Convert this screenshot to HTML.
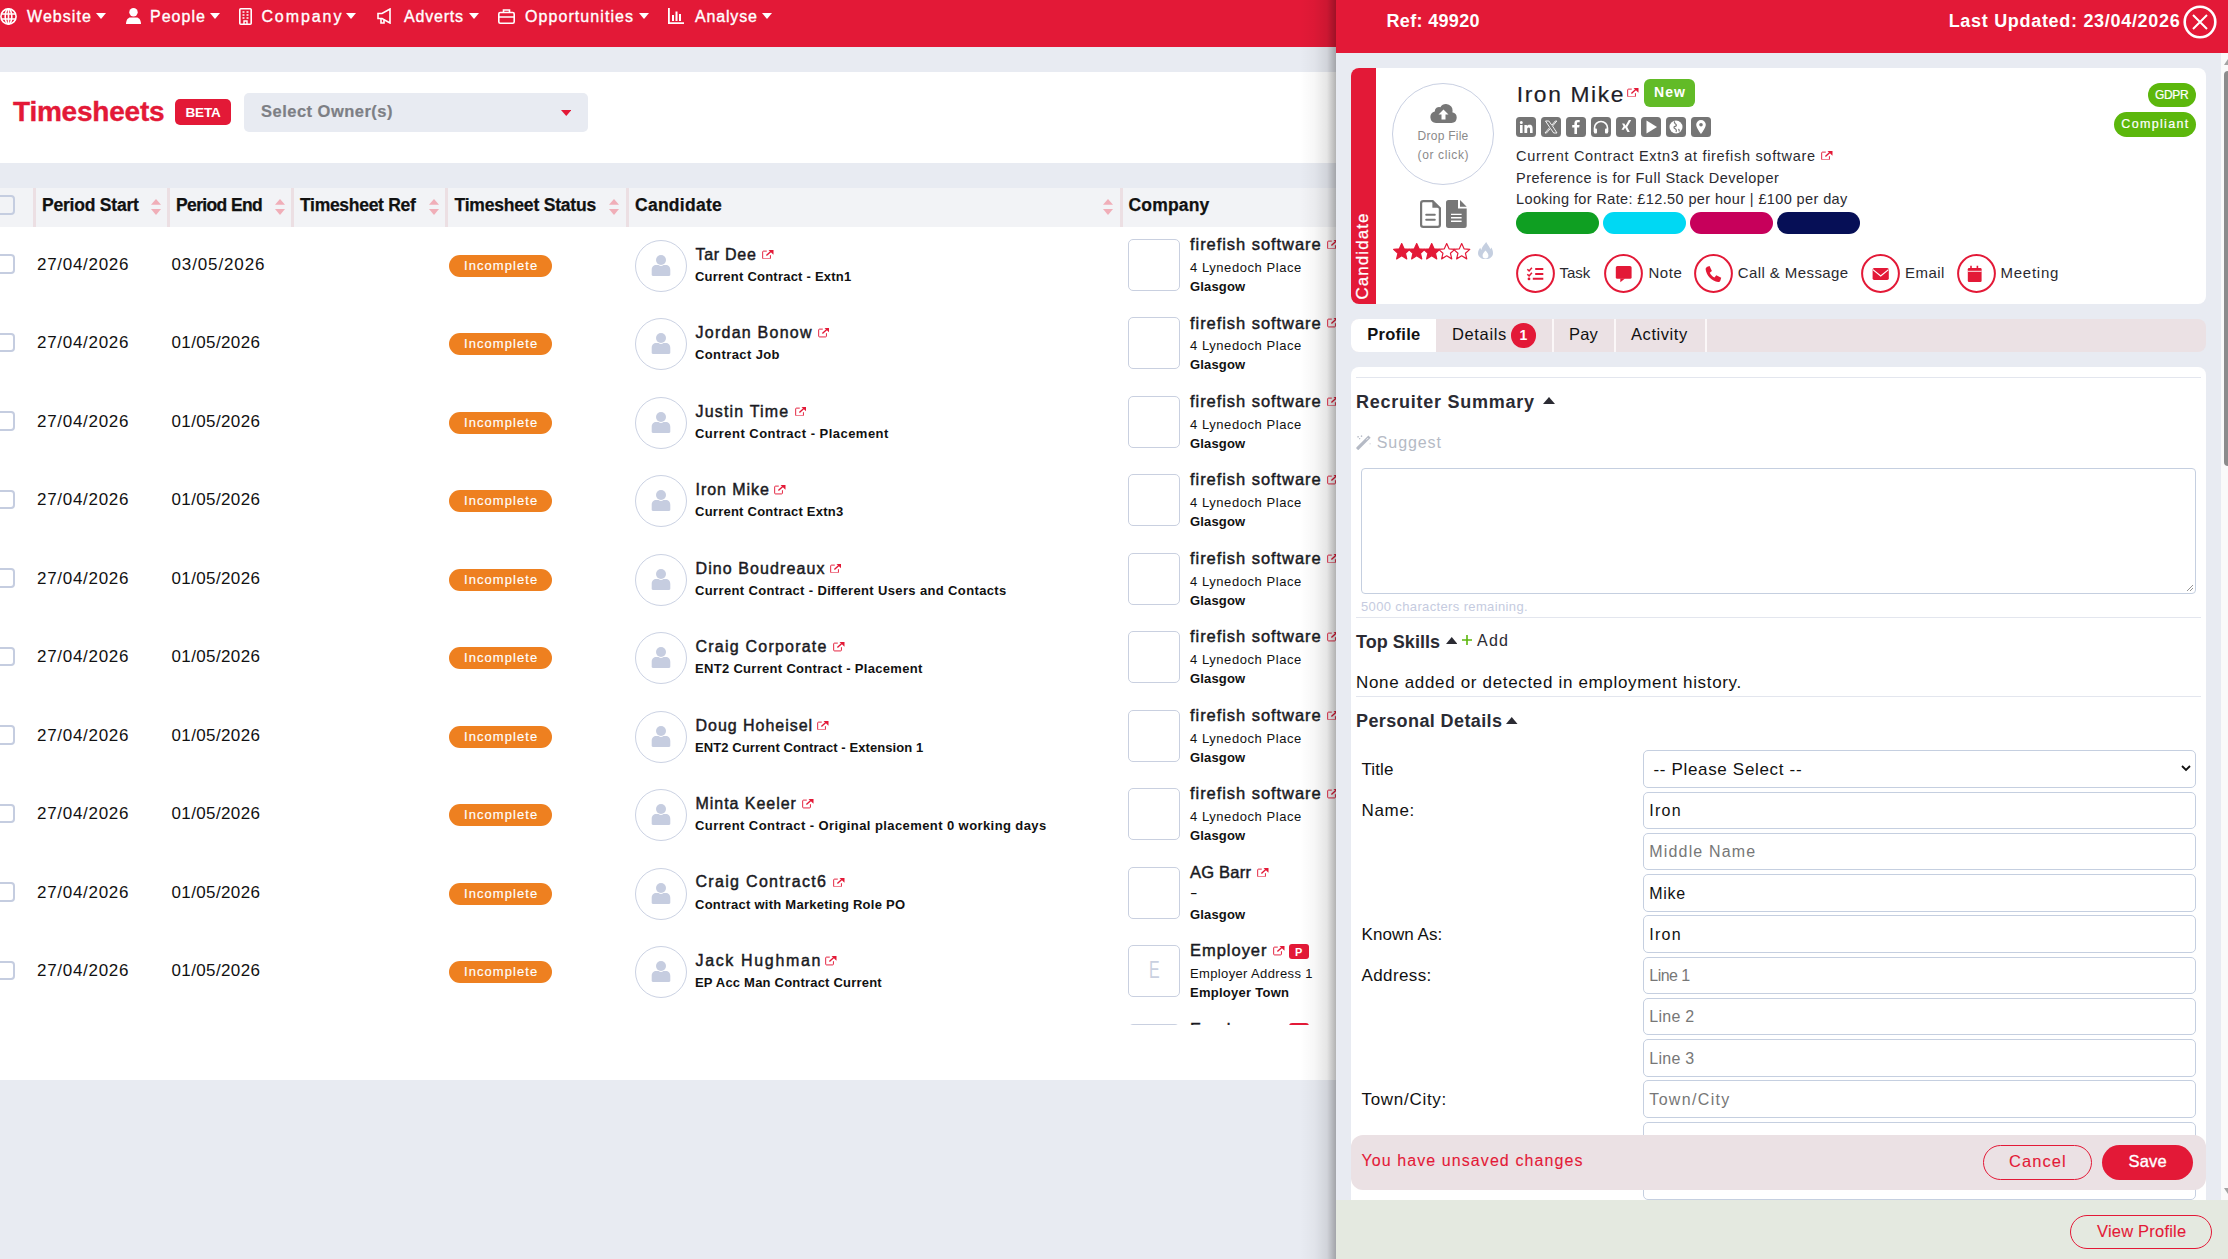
<!DOCTYPE html>
<html><head><meta charset="utf-8"><title>Timesheets</title>
<style>
html,body{margin:0;padding:0;width:2228px;height:1259px;overflow:hidden;background:#e8ebf2;font-family:"Liberation Sans",sans-serif;}
.t{position:absolute;white-space:nowrap;}
div,svg{box-sizing:border-box;}
</style></head><body>
<div style="position:absolute;left:0px;top:0px;width:1336px;height:47px;background:#e31937"></div><svg style="position:absolute;left:0;top:8px" width="17" height="17" viewBox="0 0 17 17" fill="none" stroke="#fff" stroke-width="1.6"><circle cx="8.5" cy="8.5" r="7.6"/><ellipse cx="8.5" cy="8.5" rx="3.3" ry="7.6"/><path d="M1 6h15M1 11h15M8.5 1v15"/></svg><div class="t" style="left:27.00px;top:8.65px;font-size:16px;line-height:16px;color:#fff;letter-spacing:1.065px;-webkit-text-stroke:0.35px currentColor;">Website</div><svg style="position:absolute;left:96px;top:12.5px" width="10" height="6" viewBox="0 0 10 6"><path d="M0 0H10L5.0 6Z" fill="#fff"/></svg><svg style="position:absolute;left:126px;top:8px" width="15" height="16" viewBox="0 0 15 16" fill="#fff"><circle cx="7.5" cy="4.2" r="4.2"/><path d="M0 16c0-4.5 2.5-6.6 4.2-6.6h6.6c1.7 0 4.2 2.1 4.2 6.6z"/></svg><div class="t" style="left:150.00px;top:8.65px;font-size:16px;line-height:16px;color:#fff;letter-spacing:1.016px;-webkit-text-stroke:0.35px currentColor;">People</div><svg style="position:absolute;left:210px;top:12.5px" width="10" height="6" viewBox="0 0 10 6"><path d="M0 0H10L5.0 6Z" fill="#fff"/></svg><svg style="position:absolute;left:239px;top:8px" width="13" height="17" viewBox="0 0 13 17" fill="none" stroke="#fff" stroke-width="1.6"><rect x="0.8" y="0.8" width="11.4" height="15.4" rx="1"/><path d="M3.5 4h2M7.5 4h2M3.5 7h2M7.5 7h2M3.5 10h2M7.5 10h2M5 16v-3h3v3" stroke-width="1.4"/></svg><div class="t" style="left:261.40px;top:8.65px;font-size:16px;line-height:16px;color:#fff;letter-spacing:1.921px;-webkit-text-stroke:0.35px currentColor;">Company</div><svg style="position:absolute;left:346px;top:12.5px" width="10" height="6" viewBox="0 0 10 6"><path d="M0 0H10L5.0 6Z" fill="#fff"/></svg><svg style="position:absolute;left:377px;top:8px" width="16" height="16" viewBox="0 0 16 16" fill="none" stroke="#fff" stroke-width="1.6"><path d="M1 5.5h4l8-4.5v14l-8-4.5H1z"/><path d="M4 10.5v4.5h3v-4"/></svg><div class="t" style="left:404.00px;top:8.65px;font-size:16px;line-height:16px;color:#fff;letter-spacing:0.793px;-webkit-text-stroke:0.35px currentColor;">Adverts</div><svg style="position:absolute;left:469px;top:12.5px" width="10" height="6" viewBox="0 0 10 6"><path d="M0 0H10L5.0 6Z" fill="#fff"/></svg><svg style="position:absolute;left:498px;top:9px" width="17" height="15" viewBox="0 0 17 15" fill="none" stroke="#fff" stroke-width="1.6"><rect x="0.8" y="3.5" width="15.4" height="10.7" rx="1.5"/><path d="M5.5 3.5V1h6v2.5M1 8h15"/></svg><div class="t" style="left:525.00px;top:8.65px;font-size:16px;line-height:16px;color:#fff;letter-spacing:1.070px;-webkit-text-stroke:0.35px currentColor;">Opportunities</div><svg style="position:absolute;left:639px;top:12.5px" width="10" height="6" viewBox="0 0 10 6"><path d="M0 0H10L5.0 6Z" fill="#fff"/></svg><svg style="position:absolute;left:668px;top:8px" width="16" height="16" viewBox="0 0 16 16" fill="#fff"><path d="M0 0h1.8v14.2H16V16H0z"/><rect x="4" y="7" width="2" height="6"/><rect x="7.5" y="3.5" width="2" height="9.5"/><rect x="11" y="6" width="2" height="7"/></svg><div class="t" style="left:695.00px;top:8.65px;font-size:16px;line-height:16px;color:#fff;letter-spacing:0.829px;-webkit-text-stroke:0.35px currentColor;">Analyse</div><svg style="position:absolute;left:762px;top:12.5px" width="10" height="6" viewBox="0 0 10 6"><path d="M0 0H10L5.0 6Z" fill="#fff"/></svg><div style="position:absolute;left:0px;top:72px;width:1336px;height:91px;background:#fff"></div><div class="t" style="left:13.00px;top:97.69px;font-size:28px;line-height:28px;font-weight:700;color:#e31937;letter-spacing:-0.221px;-webkit-text-stroke:0.4px currentColor;">Timesheets</div><div style="position:absolute;left:175px;top:99px;width:56px;height:26px;background:#e31937;border-radius:5px"></div><div class="t" style="left:185.50px;top:105.97px;font-size:13.5px;line-height:13.5px;font-weight:700;color:#fff;letter-spacing:-0.166px;">BETA</div><div style="position:absolute;left:244px;top:93px;width:344px;height:39px;background:#e8ebf2;border-radius:5px"></div><div class="t" style="left:261.00px;top:102.83px;font-size:16.5px;line-height:16.5px;font-weight:700;color:#7d7f85;letter-spacing:0.485px;-webkit-text-stroke:0.2px currentColor;">Select Owner(s)</div><svg style="position:absolute;left:560.5px;top:110px" width="10.5" height="6" viewBox="0 0 10.5 6"><path d="M0 0H10.5L5.25 6Z" fill="#e31937"/></svg><div style="position:absolute;left:0px;top:188px;width:1336px;height:892px;background:#fff"></div><div style="position:absolute;left:0px;top:188px;width:1336px;height:39px;background:#f2f3f6"></div><div style="position:absolute;left:-4px;top:195px;width:19px;height:19.5px;border:2px solid #c5cde0;border-radius:4px"></div><div style="position:absolute;left:33px;top:188px;width:3px;height:39px;background:#ecdfe3"></div><div style="position:absolute;left:167px;top:188px;width:3px;height:39px;background:#ecdfe3"></div><div style="position:absolute;left:291px;top:188px;width:3px;height:39px;background:#ecdfe3"></div><div style="position:absolute;left:445px;top:188px;width:3px;height:39px;background:#ecdfe3"></div><div style="position:absolute;left:626px;top:188px;width:3px;height:39px;background:#ecdfe3"></div><div style="position:absolute;left:1120px;top:188px;width:3px;height:39px;background:#ecdfe3"></div><div class="t" style="left:42.00px;top:196.78px;font-size:17.5px;line-height:17.5px;font-weight:700;color:#111;letter-spacing:-0.215px;-webkit-text-stroke:0.25px currentColor;">Period Start</div><svg style="position:absolute;left:151px;top:199px" width="10" height="16" viewBox="0 0 10 16" fill="#f0aeb8"><path d="M0 5.8L5 0L10 5.8z"/><path d="M0 10L5 16L10 10z"/></svg><div class="t" style="left:176.00px;top:196.78px;font-size:17.5px;line-height:17.5px;font-weight:700;color:#111;letter-spacing:-0.631px;-webkit-text-stroke:0.25px currentColor;">Period End</div><svg style="position:absolute;left:275px;top:199px" width="10" height="16" viewBox="0 0 10 16" fill="#f0aeb8"><path d="M0 5.8L5 0L10 5.8z"/><path d="M0 10L5 16L10 10z"/></svg><div class="t" style="left:300.00px;top:196.78px;font-size:17.5px;line-height:17.5px;font-weight:700;color:#111;letter-spacing:-0.290px;-webkit-text-stroke:0.25px currentColor;">Timesheet Ref</div><svg style="position:absolute;left:428.5px;top:199px" width="10" height="16" viewBox="0 0 10 16" fill="#f0aeb8"><path d="M0 5.8L5 0L10 5.8z"/><path d="M0 10L5 16L10 10z"/></svg><div class="t" style="left:454.50px;top:196.78px;font-size:17.5px;line-height:17.5px;font-weight:700;color:#111;letter-spacing:-0.190px;-webkit-text-stroke:0.25px currentColor;">Timesheet Status</div><svg style="position:absolute;left:609px;top:199px" width="10" height="16" viewBox="0 0 10 16" fill="#f0aeb8"><path d="M0 5.8L5 0L10 5.8z"/><path d="M0 10L5 16L10 10z"/></svg><div class="t" style="left:635.00px;top:196.78px;font-size:17.5px;line-height:17.5px;font-weight:700;color:#111;letter-spacing:0.267px;-webkit-text-stroke:0.25px currentColor;">Candidate</div><svg style="position:absolute;left:1103px;top:199px" width="10" height="16" viewBox="0 0 10 16" fill="#f0aeb8"><path d="M0 5.8L5 0L10 5.8z"/><path d="M0 10L5 16L10 10z"/></svg><div class="t" style="left:1128.50px;top:196.78px;font-size:17.5px;line-height:17.5px;font-weight:700;color:#111;letter-spacing:0.167px;-webkit-text-stroke:0.25px currentColor;">Company</div><div style="position:absolute;left:0;top:0;width:2228px;height:1259px;clip-path:inset(227px 0 234px 0)"><div style="position:absolute;left:-4px;top:254.2px;width:19px;height:19.5px;border:2px solid #c5cde0;border-radius:4px;background:#fff"></div><div class="t" style="left:37.00px;top:256.01px;font-size:17px;line-height:17px;color:#111;letter-spacing:0.708px;">27/04/2026</div><div class="t" style="left:171.50px;top:256.01px;font-size:17px;line-height:17px;color:#111;letter-spacing:0.875px;">03/05/2026</div><div style="position:absolute;left:449px;top:255.0px;width:103px;height:22px;background:#ee8020;border-radius:11px"></div><div class="t" style="left:464.00px;top:258.99px;font-size:13px;line-height:13px;color:#fff;letter-spacing:1.071px;-webkit-text-stroke:0.15px #fff;">Incomplete</div><div style="position:absolute;left:635px;top:240.0px;width:52px;height:52px;border:1px solid #cbd2e3;border-radius:50%;background:#fff"></div><svg style="position:absolute;left:651px;top:255.0px" width="20" height="21" viewBox="0 0 20 21" fill="#c6cde0"><circle cx="10" cy="5" r="5"/><path d="M0.7 15c0-3.5 2-5 4.5-5h2.3c.8.6 1.6.9 2.5.9s1.7-.3 2.5-.9h2.3c2.5 0 4.5 1.5 4.5 5v4.8c0 .7-.5 1.2-1.2 1.2H1.9c-.7 0-1.2-.5-1.2-1.2z"/></svg><div class="t" style="left:695.50px;top:246.65px;font-size:16px;line-height:16px;color:#1a1a22;letter-spacing:0.729px;-webkit-text-stroke:0.45px currentColor;">Tar Dee</div><svg style="position:absolute;left:762px;top:250.0px" width="11.5" height="9.3" viewBox="0 0 12 10" preserveAspectRatio="none" fill="none" stroke="#e31937"><path d="M5 1.2H1.6a.9.9 0 0 0-.9.9v6.6a.9.9 0 0 0 .9.9h6.3a.9.9 0 0 0 .9-.9V5.6" stroke-width="1"/><path d="M4.6 6L10 .8" stroke-width="1.4"/><path d="M6.8 0H12V5.2z" fill="#e31937" stroke="none"/></svg><div class="t" style="left:695.00px;top:269.99px;font-size:13px;line-height:13px;font-weight:700;color:#111;letter-spacing:0.229px;">Current Contract - Extn1</div><div style="position:absolute;left:1128px;top:239.0px;width:52px;height:52px;border:1px solid #c9d0e0;border-radius:5px;background:#fff"></div><div class="t" style="left:1190.00px;top:236.03px;font-size:16.5px;line-height:16.5px;color:#1a1a22;letter-spacing:0.946px;-webkit-text-stroke:0.45px currentColor;">firefish software</div><svg style="position:absolute;left:1327px;top:240.0px" width="11.5" height="9.3" viewBox="0 0 12 10" preserveAspectRatio="none" fill="none" stroke="#e31937"><path d="M5 1.2H1.6a.9.9 0 0 0-.9.9v6.6a.9.9 0 0 0 .9.9h6.3a.9.9 0 0 0 .9-.9V5.6" stroke-width="1"/><path d="M4.6 6L10 .8" stroke-width="1.4"/><path d="M6.8 0H12V5.2z" fill="#e31937" stroke="none"/></svg><div class="t" style="left:1190.00px;top:260.99px;font-size:13px;line-height:13px;color:#111;letter-spacing:0.557px;">4 Lynedoch Place</div><div class="t" style="left:1190.00px;top:279.99px;font-size:13px;line-height:13px;font-weight:700;color:#111;letter-spacing:0.156px;">Glasgow</div><div style="position:absolute;left:-4px;top:332.68px;width:19px;height:19.5px;border:2px solid #c5cde0;border-radius:4px;background:#fff"></div><div class="t" style="left:37.00px;top:334.49px;font-size:17px;line-height:17px;color:#111;letter-spacing:0.708px;">27/04/2026</div><div class="t" style="left:171.50px;top:334.49px;font-size:17px;line-height:17px;color:#111;letter-spacing:0.375px;">01/05/2026</div><div style="position:absolute;left:449px;top:333.48px;width:103px;height:22px;background:#ee8020;border-radius:11px"></div><div class="t" style="left:464.00px;top:337.47px;font-size:13px;line-height:13px;color:#fff;letter-spacing:1.071px;-webkit-text-stroke:0.15px #fff;">Incomplete</div><div style="position:absolute;left:635px;top:318.48px;width:52px;height:52px;border:1px solid #cbd2e3;border-radius:50%;background:#fff"></div><svg style="position:absolute;left:651px;top:333.48px" width="20" height="21" viewBox="0 0 20 21" fill="#c6cde0"><circle cx="10" cy="5" r="5"/><path d="M0.7 15c0-3.5 2-5 4.5-5h2.3c.8.6 1.6.9 2.5.9s1.7-.3 2.5-.9h2.3c2.5 0 4.5 1.5 4.5 5v4.8c0 .7-.5 1.2-1.2 1.2H1.9c-.7 0-1.2-.5-1.2-1.2z"/></svg><div class="t" style="left:695.50px;top:325.13px;font-size:16px;line-height:16px;color:#1a1a22;letter-spacing:1.251px;-webkit-text-stroke:0.45px currentColor;">Jordan Bonow</div><svg style="position:absolute;left:817.6px;top:328.48px" width="11.5" height="9.3" viewBox="0 0 12 10" preserveAspectRatio="none" fill="none" stroke="#e31937"><path d="M5 1.2H1.6a.9.9 0 0 0-.9.9v6.6a.9.9 0 0 0 .9.9h6.3a.9.9 0 0 0 .9-.9V5.6" stroke-width="1"/><path d="M4.6 6L10 .8" stroke-width="1.4"/><path d="M6.8 0H12V5.2z" fill="#e31937" stroke="none"/></svg><div class="t" style="left:695.00px;top:348.47px;font-size:13px;line-height:13px;font-weight:700;color:#111;letter-spacing:0.397px;">Contract Job</div><div style="position:absolute;left:1128px;top:317.48px;width:52px;height:52px;border:1px solid #c9d0e0;border-radius:5px;background:#fff"></div><div class="t" style="left:1190.00px;top:314.51px;font-size:16.5px;line-height:16.5px;color:#1a1a22;letter-spacing:0.946px;-webkit-text-stroke:0.45px currentColor;">firefish software</div><svg style="position:absolute;left:1327px;top:318.48px" width="11.5" height="9.3" viewBox="0 0 12 10" preserveAspectRatio="none" fill="none" stroke="#e31937"><path d="M5 1.2H1.6a.9.9 0 0 0-.9.9v6.6a.9.9 0 0 0 .9.9h6.3a.9.9 0 0 0 .9-.9V5.6" stroke-width="1"/><path d="M4.6 6L10 .8" stroke-width="1.4"/><path d="M6.8 0H12V5.2z" fill="#e31937" stroke="none"/></svg><div class="t" style="left:1190.00px;top:339.47px;font-size:13px;line-height:13px;color:#111;letter-spacing:0.557px;">4 Lynedoch Place</div><div class="t" style="left:1190.00px;top:358.47px;font-size:13px;line-height:13px;font-weight:700;color:#111;letter-spacing:0.156px;">Glasgow</div><div style="position:absolute;left:-4px;top:411.15999999999997px;width:19px;height:19.5px;border:2px solid #c5cde0;border-radius:4px;background:#fff"></div><div class="t" style="left:37.00px;top:412.97px;font-size:17px;line-height:17px;color:#111;letter-spacing:0.708px;">27/04/2026</div><div class="t" style="left:171.50px;top:412.97px;font-size:17px;line-height:17px;color:#111;letter-spacing:0.375px;">01/05/2026</div><div style="position:absolute;left:449px;top:411.96000000000004px;width:103px;height:22px;background:#ee8020;border-radius:11px"></div><div class="t" style="left:464.00px;top:415.95px;font-size:13px;line-height:13px;color:#fff;letter-spacing:1.071px;-webkit-text-stroke:0.15px #fff;">Incomplete</div><div style="position:absolute;left:635px;top:396.96000000000004px;width:52px;height:52px;border:1px solid #cbd2e3;border-radius:50%;background:#fff"></div><svg style="position:absolute;left:651px;top:411.96000000000004px" width="20" height="21" viewBox="0 0 20 21" fill="#c6cde0"><circle cx="10" cy="5" r="5"/><path d="M0.7 15c0-3.5 2-5 4.5-5h2.3c.8.6 1.6.9 2.5.9s1.7-.3 2.5-.9h2.3c2.5 0 4.5 1.5 4.5 5v4.8c0 .7-.5 1.2-1.2 1.2H1.9c-.7 0-1.2-.5-1.2-1.2z"/></svg><div class="t" style="left:695.50px;top:403.61px;font-size:16px;line-height:16px;color:#1a1a22;letter-spacing:1.170px;-webkit-text-stroke:0.45px currentColor;">Justin Time</div><svg style="position:absolute;left:794.5px;top:406.96000000000004px" width="11.5" height="9.3" viewBox="0 0 12 10" preserveAspectRatio="none" fill="none" stroke="#e31937"><path d="M5 1.2H1.6a.9.9 0 0 0-.9.9v6.6a.9.9 0 0 0 .9.9h6.3a.9.9 0 0 0 .9-.9V5.6" stroke-width="1"/><path d="M4.6 6L10 .8" stroke-width="1.4"/><path d="M6.8 0H12V5.2z" fill="#e31937" stroke="none"/></svg><div class="t" style="left:695.00px;top:426.95px;font-size:13px;line-height:13px;font-weight:700;color:#111;letter-spacing:0.472px;">Current Contract - Placement</div><div style="position:absolute;left:1128px;top:395.96000000000004px;width:52px;height:52px;border:1px solid #c9d0e0;border-radius:5px;background:#fff"></div><div class="t" style="left:1190.00px;top:392.99px;font-size:16.5px;line-height:16.5px;color:#1a1a22;letter-spacing:0.946px;-webkit-text-stroke:0.45px currentColor;">firefish software</div><svg style="position:absolute;left:1327px;top:396.96000000000004px" width="11.5" height="9.3" viewBox="0 0 12 10" preserveAspectRatio="none" fill="none" stroke="#e31937"><path d="M5 1.2H1.6a.9.9 0 0 0-.9.9v6.6a.9.9 0 0 0 .9.9h6.3a.9.9 0 0 0 .9-.9V5.6" stroke-width="1"/><path d="M4.6 6L10 .8" stroke-width="1.4"/><path d="M6.8 0H12V5.2z" fill="#e31937" stroke="none"/></svg><div class="t" style="left:1190.00px;top:417.95px;font-size:13px;line-height:13px;color:#111;letter-spacing:0.557px;">4 Lynedoch Place</div><div class="t" style="left:1190.00px;top:436.95px;font-size:13px;line-height:13px;font-weight:700;color:#111;letter-spacing:0.156px;">Glasgow</div><div style="position:absolute;left:-4px;top:489.64px;width:19px;height:19.5px;border:2px solid #c5cde0;border-radius:4px;background:#fff"></div><div class="t" style="left:37.00px;top:491.45px;font-size:17px;line-height:17px;color:#111;letter-spacing:0.708px;">27/04/2026</div><div class="t" style="left:171.50px;top:491.45px;font-size:17px;line-height:17px;color:#111;letter-spacing:0.375px;">01/05/2026</div><div style="position:absolute;left:449px;top:490.44px;width:103px;height:22px;background:#ee8020;border-radius:11px"></div><div class="t" style="left:464.00px;top:494.43px;font-size:13px;line-height:13px;color:#fff;letter-spacing:1.071px;-webkit-text-stroke:0.15px #fff;">Incomplete</div><div style="position:absolute;left:635px;top:475.44px;width:52px;height:52px;border:1px solid #cbd2e3;border-radius:50%;background:#fff"></div><svg style="position:absolute;left:651px;top:490.44px" width="20" height="21" viewBox="0 0 20 21" fill="#c6cde0"><circle cx="10" cy="5" r="5"/><path d="M0.7 15c0-3.5 2-5 4.5-5h2.3c.8.6 1.6.9 2.5.9s1.7-.3 2.5-.9h2.3c2.5 0 4.5 1.5 4.5 5v4.8c0 .7-.5 1.2-1.2 1.2H1.9c-.7 0-1.2-.5-1.2-1.2z"/></svg><div class="t" style="left:695.50px;top:482.09px;font-size:16px;line-height:16px;color:#1a1a22;letter-spacing:0.938px;-webkit-text-stroke:0.45px currentColor;">Iron Mike</div><svg style="position:absolute;left:774px;top:485.44px" width="11.5" height="9.3" viewBox="0 0 12 10" preserveAspectRatio="none" fill="none" stroke="#e31937"><path d="M5 1.2H1.6a.9.9 0 0 0-.9.9v6.6a.9.9 0 0 0 .9.9h6.3a.9.9 0 0 0 .9-.9V5.6" stroke-width="1"/><path d="M4.6 6L10 .8" stroke-width="1.4"/><path d="M6.8 0H12V5.2z" fill="#e31937" stroke="none"/></svg><div class="t" style="left:695.00px;top:505.43px;font-size:13px;line-height:13px;font-weight:700;color:#111;letter-spacing:0.248px;">Current Contract Extn3</div><div style="position:absolute;left:1128px;top:474.44px;width:52px;height:52px;border:1px solid #c9d0e0;border-radius:5px;background:#fff"></div><div class="t" style="left:1190.00px;top:471.47px;font-size:16.5px;line-height:16.5px;color:#1a1a22;letter-spacing:0.946px;-webkit-text-stroke:0.45px currentColor;">firefish software</div><svg style="position:absolute;left:1327px;top:475.44px" width="11.5" height="9.3" viewBox="0 0 12 10" preserveAspectRatio="none" fill="none" stroke="#e31937"><path d="M5 1.2H1.6a.9.9 0 0 0-.9.9v6.6a.9.9 0 0 0 .9.9h6.3a.9.9 0 0 0 .9-.9V5.6" stroke-width="1"/><path d="M4.6 6L10 .8" stroke-width="1.4"/><path d="M6.8 0H12V5.2z" fill="#e31937" stroke="none"/></svg><div class="t" style="left:1190.00px;top:496.43px;font-size:13px;line-height:13px;color:#111;letter-spacing:0.557px;">4 Lynedoch Place</div><div class="t" style="left:1190.00px;top:515.43px;font-size:13px;line-height:13px;font-weight:700;color:#111;letter-spacing:0.156px;">Glasgow</div><div style="position:absolute;left:-4px;top:568.12px;width:19px;height:19.5px;border:2px solid #c5cde0;border-radius:4px;background:#fff"></div><div class="t" style="left:37.00px;top:569.93px;font-size:17px;line-height:17px;color:#111;letter-spacing:0.708px;">27/04/2026</div><div class="t" style="left:171.50px;top:569.93px;font-size:17px;line-height:17px;color:#111;letter-spacing:0.375px;">01/05/2026</div><div style="position:absolute;left:449px;top:568.9200000000001px;width:103px;height:22px;background:#ee8020;border-radius:11px"></div><div class="t" style="left:464.00px;top:572.91px;font-size:13px;line-height:13px;color:#fff;letter-spacing:1.071px;-webkit-text-stroke:0.15px #fff;">Incomplete</div><div style="position:absolute;left:635px;top:553.9200000000001px;width:52px;height:52px;border:1px solid #cbd2e3;border-radius:50%;background:#fff"></div><svg style="position:absolute;left:651px;top:568.9200000000001px" width="20" height="21" viewBox="0 0 20 21" fill="#c6cde0"><circle cx="10" cy="5" r="5"/><path d="M0.7 15c0-3.5 2-5 4.5-5h2.3c.8.6 1.6.9 2.5.9s1.7-.3 2.5-.9h2.3c2.5 0 4.5 1.5 4.5 5v4.8c0 .7-.5 1.2-1.2 1.2H1.9c-.7 0-1.2-.5-1.2-1.2z"/></svg><div class="t" style="left:695.50px;top:560.57px;font-size:16px;line-height:16px;color:#1a1a22;letter-spacing:1.097px;-webkit-text-stroke:0.45px currentColor;">Dino Boudreaux</div><svg style="position:absolute;left:829.7px;top:563.9200000000001px" width="11.5" height="9.3" viewBox="0 0 12 10" preserveAspectRatio="none" fill="none" stroke="#e31937"><path d="M5 1.2H1.6a.9.9 0 0 0-.9.9v6.6a.9.9 0 0 0 .9.9h6.3a.9.9 0 0 0 .9-.9V5.6" stroke-width="1"/><path d="M4.6 6L10 .8" stroke-width="1.4"/><path d="M6.8 0H12V5.2z" fill="#e31937" stroke="none"/></svg><div class="t" style="left:695.00px;top:583.91px;font-size:13px;line-height:13px;font-weight:700;color:#111;letter-spacing:0.359px;">Current Contract - Different Users and Contacts</div><div style="position:absolute;left:1128px;top:552.9200000000001px;width:52px;height:52px;border:1px solid #c9d0e0;border-radius:5px;background:#fff"></div><div class="t" style="left:1190.00px;top:549.95px;font-size:16.5px;line-height:16.5px;color:#1a1a22;letter-spacing:0.946px;-webkit-text-stroke:0.45px currentColor;">firefish software</div><svg style="position:absolute;left:1327px;top:553.9200000000001px" width="11.5" height="9.3" viewBox="0 0 12 10" preserveAspectRatio="none" fill="none" stroke="#e31937"><path d="M5 1.2H1.6a.9.9 0 0 0-.9.9v6.6a.9.9 0 0 0 .9.9h6.3a.9.9 0 0 0 .9-.9V5.6" stroke-width="1"/><path d="M4.6 6L10 .8" stroke-width="1.4"/><path d="M6.8 0H12V5.2z" fill="#e31937" stroke="none"/></svg><div class="t" style="left:1190.00px;top:574.91px;font-size:13px;line-height:13px;color:#111;letter-spacing:0.557px;">4 Lynedoch Place</div><div class="t" style="left:1190.00px;top:593.91px;font-size:13px;line-height:13px;font-weight:700;color:#111;letter-spacing:0.156px;">Glasgow</div><div style="position:absolute;left:-4px;top:646.5999999999999px;width:19px;height:19.5px;border:2px solid #c5cde0;border-radius:4px;background:#fff"></div><div class="t" style="left:37.00px;top:648.41px;font-size:17px;line-height:17px;color:#111;letter-spacing:0.708px;">27/04/2026</div><div class="t" style="left:171.50px;top:648.41px;font-size:17px;line-height:17px;color:#111;letter-spacing:0.375px;">01/05/2026</div><div style="position:absolute;left:449px;top:647.4px;width:103px;height:22px;background:#ee8020;border-radius:11px"></div><div class="t" style="left:464.00px;top:651.39px;font-size:13px;line-height:13px;color:#fff;letter-spacing:1.071px;-webkit-text-stroke:0.15px #fff;">Incomplete</div><div style="position:absolute;left:635px;top:632.4px;width:52px;height:52px;border:1px solid #cbd2e3;border-radius:50%;background:#fff"></div><svg style="position:absolute;left:651px;top:647.4px" width="20" height="21" viewBox="0 0 20 21" fill="#c6cde0"><circle cx="10" cy="5" r="5"/><path d="M0.7 15c0-3.5 2-5 4.5-5h2.3c.8.6 1.6.9 2.5.9s1.7-.3 2.5-.9h2.3c2.5 0 4.5 1.5 4.5 5v4.8c0 .7-.5 1.2-1.2 1.2H1.9c-.7 0-1.2-.5-1.2-1.2z"/></svg><div class="t" style="left:695.50px;top:639.05px;font-size:16px;line-height:16px;color:#1a1a22;letter-spacing:1.219px;-webkit-text-stroke:0.45px currentColor;">Craig Corporate</div><svg style="position:absolute;left:833px;top:642.4px" width="11.5" height="9.3" viewBox="0 0 12 10" preserveAspectRatio="none" fill="none" stroke="#e31937"><path d="M5 1.2H1.6a.9.9 0 0 0-.9.9v6.6a.9.9 0 0 0 .9.9h6.3a.9.9 0 0 0 .9-.9V5.6" stroke-width="1"/><path d="M4.6 6L10 .8" stroke-width="1.4"/><path d="M6.8 0H12V5.2z" fill="#e31937" stroke="none"/></svg><div class="t" style="left:695.00px;top:662.39px;font-size:13px;line-height:13px;font-weight:700;color:#111;letter-spacing:0.309px;">ENT2 Current Contract - Placement</div><div style="position:absolute;left:1128px;top:631.4px;width:52px;height:52px;border:1px solid #c9d0e0;border-radius:5px;background:#fff"></div><div class="t" style="left:1190.00px;top:628.43px;font-size:16.5px;line-height:16.5px;color:#1a1a22;letter-spacing:0.946px;-webkit-text-stroke:0.45px currentColor;">firefish software</div><svg style="position:absolute;left:1327px;top:632.4px" width="11.5" height="9.3" viewBox="0 0 12 10" preserveAspectRatio="none" fill="none" stroke="#e31937"><path d="M5 1.2H1.6a.9.9 0 0 0-.9.9v6.6a.9.9 0 0 0 .9.9h6.3a.9.9 0 0 0 .9-.9V5.6" stroke-width="1"/><path d="M4.6 6L10 .8" stroke-width="1.4"/><path d="M6.8 0H12V5.2z" fill="#e31937" stroke="none"/></svg><div class="t" style="left:1190.00px;top:653.39px;font-size:13px;line-height:13px;color:#111;letter-spacing:0.557px;">4 Lynedoch Place</div><div class="t" style="left:1190.00px;top:672.39px;font-size:13px;line-height:13px;font-weight:700;color:#111;letter-spacing:0.156px;">Glasgow</div><div style="position:absolute;left:-4px;top:725.0799999999999px;width:19px;height:19.5px;border:2px solid #c5cde0;border-radius:4px;background:#fff"></div><div class="t" style="left:37.00px;top:726.89px;font-size:17px;line-height:17px;color:#111;letter-spacing:0.708px;">27/04/2026</div><div class="t" style="left:171.50px;top:726.89px;font-size:17px;line-height:17px;color:#111;letter-spacing:0.375px;">01/05/2026</div><div style="position:absolute;left:449px;top:725.88px;width:103px;height:22px;background:#ee8020;border-radius:11px"></div><div class="t" style="left:464.00px;top:729.87px;font-size:13px;line-height:13px;color:#fff;letter-spacing:1.071px;-webkit-text-stroke:0.15px #fff;">Incomplete</div><div style="position:absolute;left:635px;top:710.88px;width:52px;height:52px;border:1px solid #cbd2e3;border-radius:50%;background:#fff"></div><svg style="position:absolute;left:651px;top:725.88px" width="20" height="21" viewBox="0 0 20 21" fill="#c6cde0"><circle cx="10" cy="5" r="5"/><path d="M0.7 15c0-3.5 2-5 4.5-5h2.3c.8.6 1.6.9 2.5.9s1.7-.3 2.5-.9h2.3c2.5 0 4.5 1.5 4.5 5v4.8c0 .7-.5 1.2-1.2 1.2H1.9c-.7 0-1.2-.5-1.2-1.2z"/></svg><div class="t" style="left:695.50px;top:717.53px;font-size:16px;line-height:16px;color:#1a1a22;letter-spacing:0.967px;-webkit-text-stroke:0.45px currentColor;">Doug Hoheisel</div><svg style="position:absolute;left:817px;top:720.88px" width="11.5" height="9.3" viewBox="0 0 12 10" preserveAspectRatio="none" fill="none" stroke="#e31937"><path d="M5 1.2H1.6a.9.9 0 0 0-.9.9v6.6a.9.9 0 0 0 .9.9h6.3a.9.9 0 0 0 .9-.9V5.6" stroke-width="1"/><path d="M4.6 6L10 .8" stroke-width="1.4"/><path d="M6.8 0H12V5.2z" fill="#e31937" stroke="none"/></svg><div class="t" style="left:695.00px;top:740.87px;font-size:13px;line-height:13px;font-weight:700;color:#111;letter-spacing:0.084px;">ENT2 Current Contract - Extension 1</div><div style="position:absolute;left:1128px;top:709.88px;width:52px;height:52px;border:1px solid #c9d0e0;border-radius:5px;background:#fff"></div><div class="t" style="left:1190.00px;top:706.91px;font-size:16.5px;line-height:16.5px;color:#1a1a22;letter-spacing:0.946px;-webkit-text-stroke:0.45px currentColor;">firefish software</div><svg style="position:absolute;left:1327px;top:710.88px" width="11.5" height="9.3" viewBox="0 0 12 10" preserveAspectRatio="none" fill="none" stroke="#e31937"><path d="M5 1.2H1.6a.9.9 0 0 0-.9.9v6.6a.9.9 0 0 0 .9.9h6.3a.9.9 0 0 0 .9-.9V5.6" stroke-width="1"/><path d="M4.6 6L10 .8" stroke-width="1.4"/><path d="M6.8 0H12V5.2z" fill="#e31937" stroke="none"/></svg><div class="t" style="left:1190.00px;top:731.87px;font-size:13px;line-height:13px;color:#111;letter-spacing:0.557px;">4 Lynedoch Place</div><div class="t" style="left:1190.00px;top:750.87px;font-size:13px;line-height:13px;font-weight:700;color:#111;letter-spacing:0.156px;">Glasgow</div><div style="position:absolute;left:-4px;top:803.56px;width:19px;height:19.5px;border:2px solid #c5cde0;border-radius:4px;background:#fff"></div><div class="t" style="left:37.00px;top:805.37px;font-size:17px;line-height:17px;color:#111;letter-spacing:0.708px;">27/04/2026</div><div class="t" style="left:171.50px;top:805.37px;font-size:17px;line-height:17px;color:#111;letter-spacing:0.375px;">01/05/2026</div><div style="position:absolute;left:449px;top:804.36px;width:103px;height:22px;background:#ee8020;border-radius:11px"></div><div class="t" style="left:464.00px;top:808.35px;font-size:13px;line-height:13px;color:#fff;letter-spacing:1.071px;-webkit-text-stroke:0.15px #fff;">Incomplete</div><div style="position:absolute;left:635px;top:789.36px;width:52px;height:52px;border:1px solid #cbd2e3;border-radius:50%;background:#fff"></div><svg style="position:absolute;left:651px;top:804.36px" width="20" height="21" viewBox="0 0 20 21" fill="#c6cde0"><circle cx="10" cy="5" r="5"/><path d="M0.7 15c0-3.5 2-5 4.5-5h2.3c.8.6 1.6.9 2.5.9s1.7-.3 2.5-.9h2.3c2.5 0 4.5 1.5 4.5 5v4.8c0 .7-.5 1.2-1.2 1.2H1.9c-.7 0-1.2-.5-1.2-1.2z"/></svg><div class="t" style="left:695.50px;top:796.01px;font-size:16px;line-height:16px;color:#1a1a22;letter-spacing:0.955px;-webkit-text-stroke:0.45px currentColor;">Minta Keeler</div><svg style="position:absolute;left:802px;top:799.36px" width="11.5" height="9.3" viewBox="0 0 12 10" preserveAspectRatio="none" fill="none" stroke="#e31937"><path d="M5 1.2H1.6a.9.9 0 0 0-.9.9v6.6a.9.9 0 0 0 .9.9h6.3a.9.9 0 0 0 .9-.9V5.6" stroke-width="1"/><path d="M4.6 6L10 .8" stroke-width="1.4"/><path d="M6.8 0H12V5.2z" fill="#e31937" stroke="none"/></svg><div class="t" style="left:695.00px;top:819.35px;font-size:13px;line-height:13px;font-weight:700;color:#111;letter-spacing:0.414px;">Current Contract - Original placement 0 working days</div><div style="position:absolute;left:1128px;top:788.36px;width:52px;height:52px;border:1px solid #c9d0e0;border-radius:5px;background:#fff"></div><div class="t" style="left:1190.00px;top:785.39px;font-size:16.5px;line-height:16.5px;color:#1a1a22;letter-spacing:0.946px;-webkit-text-stroke:0.45px currentColor;">firefish software</div><svg style="position:absolute;left:1327px;top:789.36px" width="11.5" height="9.3" viewBox="0 0 12 10" preserveAspectRatio="none" fill="none" stroke="#e31937"><path d="M5 1.2H1.6a.9.9 0 0 0-.9.9v6.6a.9.9 0 0 0 .9.9h6.3a.9.9 0 0 0 .9-.9V5.6" stroke-width="1"/><path d="M4.6 6L10 .8" stroke-width="1.4"/><path d="M6.8 0H12V5.2z" fill="#e31937" stroke="none"/></svg><div class="t" style="left:1190.00px;top:810.35px;font-size:13px;line-height:13px;color:#111;letter-spacing:0.557px;">4 Lynedoch Place</div><div class="t" style="left:1190.00px;top:829.35px;font-size:13px;line-height:13px;font-weight:700;color:#111;letter-spacing:0.156px;">Glasgow</div><div style="position:absolute;left:-4px;top:882.04px;width:19px;height:19.5px;border:2px solid #c5cde0;border-radius:4px;background:#fff"></div><div class="t" style="left:37.00px;top:883.85px;font-size:17px;line-height:17px;color:#111;letter-spacing:0.708px;">27/04/2026</div><div class="t" style="left:171.50px;top:883.85px;font-size:17px;line-height:17px;color:#111;letter-spacing:0.375px;">01/05/2026</div><div style="position:absolute;left:449px;top:882.84px;width:103px;height:22px;background:#ee8020;border-radius:11px"></div><div class="t" style="left:464.00px;top:886.83px;font-size:13px;line-height:13px;color:#fff;letter-spacing:1.071px;-webkit-text-stroke:0.15px #fff;">Incomplete</div><div style="position:absolute;left:635px;top:867.84px;width:52px;height:52px;border:1px solid #cbd2e3;border-radius:50%;background:#fff"></div><svg style="position:absolute;left:651px;top:882.84px" width="20" height="21" viewBox="0 0 20 21" fill="#c6cde0"><circle cx="10" cy="5" r="5"/><path d="M0.7 15c0-3.5 2-5 4.5-5h2.3c.8.6 1.6.9 2.5.9s1.7-.3 2.5-.9h2.3c2.5 0 4.5 1.5 4.5 5v4.8c0 .7-.5 1.2-1.2 1.2H1.9c-.7 0-1.2-.5-1.2-1.2z"/></svg><div class="t" style="left:695.50px;top:874.49px;font-size:16px;line-height:16px;color:#1a1a22;letter-spacing:1.311px;-webkit-text-stroke:0.45px currentColor;">Craig Contract6</div><svg style="position:absolute;left:833px;top:877.84px" width="11.5" height="9.3" viewBox="0 0 12 10" preserveAspectRatio="none" fill="none" stroke="#e31937"><path d="M5 1.2H1.6a.9.9 0 0 0-.9.9v6.6a.9.9 0 0 0 .9.9h6.3a.9.9 0 0 0 .9-.9V5.6" stroke-width="1"/><path d="M4.6 6L10 .8" stroke-width="1.4"/><path d="M6.8 0H12V5.2z" fill="#e31937" stroke="none"/></svg><div class="t" style="left:695.00px;top:897.83px;font-size:13px;line-height:13px;font-weight:700;color:#111;letter-spacing:0.262px;">Contract with Marketing Role PO</div><div style="position:absolute;left:1128px;top:866.84px;width:52px;height:52px;border:1px solid #c9d0e0;border-radius:5px;background:#fff"></div><div class="t" style="left:1190.00px;top:863.87px;font-size:16.5px;line-height:16.5px;color:#1a1a22;letter-spacing:0.217px;-webkit-text-stroke:0.45px currentColor;">AG Barr</div><svg style="position:absolute;left:1257px;top:867.84px" width="11.5" height="9.3" viewBox="0 0 12 10" preserveAspectRatio="none" fill="none" stroke="#e31937"><path d="M5 1.2H1.6a.9.9 0 0 0-.9.9v6.6a.9.9 0 0 0 .9.9h6.3a.9.9 0 0 0 .9-.9V5.6" stroke-width="1"/><path d="M4.6 6L10 .8" stroke-width="1.4"/><path d="M6.8 0H12V5.2z" fill="#e31937" stroke="none"/></svg><div class="t" style="left:1190.00px;top:886.49px;font-size:14px;line-height:14px;color:#111;transform:scaleX(1.6);transform-origin:0 0;">-</div><div class="t" style="left:1190.00px;top:907.83px;font-size:13px;line-height:13px;font-weight:700;color:#111;letter-spacing:0.156px;">Glasgow</div><div style="position:absolute;left:-4px;top:960.52px;width:19px;height:19.5px;border:2px solid #c5cde0;border-radius:4px;background:#fff"></div><div class="t" style="left:37.00px;top:962.33px;font-size:17px;line-height:17px;color:#111;letter-spacing:0.708px;">27/04/2026</div><div class="t" style="left:171.50px;top:962.33px;font-size:17px;line-height:17px;color:#111;letter-spacing:0.375px;">01/05/2026</div><div style="position:absolute;left:449px;top:961.32px;width:103px;height:22px;background:#ee8020;border-radius:11px"></div><div class="t" style="left:464.00px;top:965.31px;font-size:13px;line-height:13px;color:#fff;letter-spacing:1.071px;-webkit-text-stroke:0.15px #fff;">Incomplete</div><div style="position:absolute;left:635px;top:946.32px;width:52px;height:52px;border:1px solid #cbd2e3;border-radius:50%;background:#fff"></div><svg style="position:absolute;left:651px;top:961.32px" width="20" height="21" viewBox="0 0 20 21" fill="#c6cde0"><circle cx="10" cy="5" r="5"/><path d="M0.7 15c0-3.5 2-5 4.5-5h2.3c.8.6 1.6.9 2.5.9s1.7-.3 2.5-.9h2.3c2.5 0 4.5 1.5 4.5 5v4.8c0 .7-.5 1.2-1.2 1.2H1.9c-.7 0-1.2-.5-1.2-1.2z"/></svg><div class="t" style="left:695.50px;top:952.97px;font-size:16px;line-height:16px;color:#1a1a22;letter-spacing:1.653px;-webkit-text-stroke:0.45px currentColor;">Jack Hughman</div><svg style="position:absolute;left:825px;top:956.32px" width="11.5" height="9.3" viewBox="0 0 12 10" preserveAspectRatio="none" fill="none" stroke="#e31937"><path d="M5 1.2H1.6a.9.9 0 0 0-.9.9v6.6a.9.9 0 0 0 .9.9h6.3a.9.9 0 0 0 .9-.9V5.6" stroke-width="1"/><path d="M4.6 6L10 .8" stroke-width="1.4"/><path d="M6.8 0H12V5.2z" fill="#e31937" stroke="none"/></svg><div class="t" style="left:695.00px;top:976.31px;font-size:13px;line-height:13px;font-weight:700;color:#111;letter-spacing:0.204px;">EP Acc Man Contract Current</div><div style="position:absolute;left:1128px;top:945.32px;width:52px;height:52px;border:1px solid #c9d0e0;border-radius:5px;background:#fff"></div><div class="t" style="left:1148.60px;top:959.42px;font-size:23.5px;line-height:23.5px;color:#c9d0e0;transform:scaleX(0.68);transform-origin:0 0;">E</div><div style="position:absolute;left:1289px;top:944.3600000000001px;width:20px;height:15px;background:#e31937;border-radius:3px"></div><div class="t" style="left:1295.00px;top:946.55px;font-size:11px;line-height:11px;font-weight:700;color:#fff;">P</div><div class="t" style="left:1190.00px;top:942.35px;font-size:16.5px;line-height:16.5px;color:#1a1a22;letter-spacing:0.972px;-webkit-text-stroke:0.45px currentColor;">Employer</div><svg style="position:absolute;left:1273px;top:946.32px" width="11.5" height="9.3" viewBox="0 0 12 10" preserveAspectRatio="none" fill="none" stroke="#e31937"><path d="M5 1.2H1.6a.9.9 0 0 0-.9.9v6.6a.9.9 0 0 0 .9.9h6.3a.9.9 0 0 0 .9-.9V5.6" stroke-width="1"/><path d="M4.6 6L10 .8" stroke-width="1.4"/><path d="M6.8 0H12V5.2z" fill="#e31937" stroke="none"/></svg><div class="t" style="left:1190.00px;top:967.31px;font-size:13px;line-height:13px;color:#111;letter-spacing:0.363px;">Employer Address 1</div><div class="t" style="left:1190.00px;top:986.31px;font-size:13px;line-height:13px;font-weight:700;color:#111;letter-spacing:0.260px;">Employer Town</div><div style="position:absolute;left:-4px;top:1039.0px;width:19px;height:19.5px;border:2px solid #c5cde0;border-radius:4px;background:#fff"></div><div class="t" style="left:37.00px;top:1040.81px;font-size:17px;line-height:17px;color:#111;letter-spacing:0.708px;">27/04/2026</div><div class="t" style="left:171.50px;top:1040.81px;font-size:17px;line-height:17px;color:#111;letter-spacing:0.375px;">01/05/2026</div><div style="position:absolute;left:449px;top:1039.8px;width:103px;height:22px;background:#ee8020;border-radius:11px"></div><div class="t" style="left:464.00px;top:1043.79px;font-size:13px;line-height:13px;color:#fff;letter-spacing:1.071px;-webkit-text-stroke:0.15px #fff;">Incomplete</div><div style="position:absolute;left:635px;top:1024.8px;width:52px;height:52px;border:1px solid #cbd2e3;border-radius:50%;background:#fff"></div><svg style="position:absolute;left:651px;top:1039.8px" width="20" height="21" viewBox="0 0 20 21" fill="#c6cde0"><circle cx="10" cy="5" r="5"/><path d="M0.7 15c0-3.5 2-5 4.5-5h2.3c.8.6 1.6.9 2.5.9s1.7-.3 2.5-.9h2.3c2.5 0 4.5 1.5 4.5 5v4.8c0 .7-.5 1.2-1.2 1.2H1.9c-.7 0-1.2-.5-1.2-1.2z"/></svg><div class="t" style="left:695.50px;top:1031.45px;font-size:16px;line-height:16px;color:#1a1a22;letter-spacing:1.653px;-webkit-text-stroke:0.45px currentColor;">Jack Hughman</div><svg style="position:absolute;left:825px;top:1034.8px" width="11.5" height="9.3" viewBox="0 0 12 10" preserveAspectRatio="none" fill="none" stroke="#e31937"><path d="M5 1.2H1.6a.9.9 0 0 0-.9.9v6.6a.9.9 0 0 0 .9.9h6.3a.9.9 0 0 0 .9-.9V5.6" stroke-width="1"/><path d="M4.6 6L10 .8" stroke-width="1.4"/><path d="M6.8 0H12V5.2z" fill="#e31937" stroke="none"/></svg><div class="t" style="left:695.00px;top:1054.79px;font-size:13px;line-height:13px;font-weight:700;color:#111;letter-spacing:0.204px;">EP Acc Man Contract Current</div><div style="position:absolute;left:1128px;top:1023.8px;width:52px;height:52px;border:1px solid #c9d0e0;border-radius:5px;background:#fff"></div><div class="t" style="left:1148.60px;top:1037.90px;font-size:23.5px;line-height:23.5px;color:#c9d0e0;transform:scaleX(0.68);transform-origin:0 0;">E</div><div style="position:absolute;left:1289px;top:1022.8399999999999px;width:20px;height:15px;background:#e31937;border-radius:3px"></div><div class="t" style="left:1295.00px;top:1025.03px;font-size:11px;line-height:11px;font-weight:700;color:#fff;">P</div><div class="t" style="left:1190.00px;top:1020.83px;font-size:16.5px;line-height:16.5px;color:#1a1a22;letter-spacing:0.972px;-webkit-text-stroke:0.45px currentColor;">Employer</div><svg style="position:absolute;left:1273px;top:1024.8px" width="11.5" height="9.3" viewBox="0 0 12 10" preserveAspectRatio="none" fill="none" stroke="#e31937"><path d="M5 1.2H1.6a.9.9 0 0 0-.9.9v6.6a.9.9 0 0 0 .9.9h6.3a.9.9 0 0 0 .9-.9V5.6" stroke-width="1"/><path d="M4.6 6L10 .8" stroke-width="1.4"/><path d="M6.8 0H12V5.2z" fill="#e31937" stroke="none"/></svg><div class="t" style="left:1190.00px;top:1045.79px;font-size:13px;line-height:13px;color:#111;letter-spacing:0.363px;">Employer Address 1</div><div class="t" style="left:1190.00px;top:1064.79px;font-size:13px;line-height:13px;font-weight:700;color:#111;letter-spacing:0.260px;">Employer Town</div></div><div style="position:absolute;left:1300px;top:0;width:36px;height:1259px;background:linear-gradient(to right,rgba(0,0,0,0),rgba(0,0,0,.03) 40%,rgba(0,0,0,.1) 75%,rgba(0,0,0,.3))"></div><div style="position:absolute;left:1336px;top:0px;width:892px;height:1259px;background:#e8ebf2"></div><div style="position:absolute;left:1336px;top:0px;width:892px;height:53px;background:#e31937"></div><div class="t" style="left:1386.50px;top:11.76px;font-size:18px;line-height:18px;font-weight:700;color:#fff;letter-spacing:0.329px;">Ref: 49920</div><div class="t" style="left:1948.70px;top:12.16px;font-size:18px;line-height:18px;font-weight:700;color:#fff;letter-spacing:0.692px;">Last Updated: 23/04/2026</div><svg style="position:absolute;left:2183px;top:5px" width="34" height="34" viewBox="0 0 34 34" fill="none" stroke="#fff"><circle cx="17" cy="17" r="15.3" stroke-width="2.6"/><path d="M10 10L24 24M24 10L10 24" stroke-width="2"/></svg><div style="position:absolute;left:2221px;top:53px;width:7px;height:1147px;background:#fafafa"></div><svg style="position:absolute;left:2224px;top:59px" width="8" height="6" viewBox="0 0 8 6"><path d="M0 6H8L4 0z" fill="#a3a3a3"/></svg><div style="position:absolute;left:2224px;top:71px;width:9px;height:395px;background:#8c8c8c;border-radius:4px"></div><svg style="position:absolute;left:2224px;top:1188px" width="8" height="6" viewBox="0 0 8 6"><path d="M0 0H8L4 6z" fill="#a3a3a3"/></svg><div style="position:absolute;left:1351px;top:68px;width:855px;height:236px;background:#fff;border-radius:8px"></div><div style="position:absolute;left:1351px;top:68px;width:25px;height:236px;background:#e31937;border-radius:8px 0 0 8px"></div><div class="t" style="left:1361.9px;top:255.6px;font-size:17px;line-height:17px;color:#fff;transform:translate(-50%,-50%) rotate(-90deg);letter-spacing:1.05px;-webkit-text-stroke:0.25px #fff">Candidate</div><div style="position:absolute;left:1392px;top:83px;width:102px;height:102px;border:1px solid #c9d0e2;border-radius:50%"></div><svg style="position:absolute;left:1430px;top:104px" width="27" height="19" viewBox="0 0 27 19"><path d="M22.3 8.3A6.5 6.5 0 0 0 16 0a6.4 6.4 0 0 0-5.6 3.2A4.3 4.3 0 0 0 4.8 7.4 5.9 5.9 0 0 0 6 19h15.5a5.4 5.4 0 0 0 .8-10.7z" fill="#777"/><path d="M13.5 5.5l-5 5h3v5h4v-5h3z" fill="#fff"/></svg><div class="t" style="left:1417.60px;top:129.84px;font-size:12px;line-height:12px;color:#8a8a8a;letter-spacing:0.249px;">Drop File</div><div class="t" style="left:1417.60px;top:149.34px;font-size:12px;line-height:12px;color:#8a8a8a;letter-spacing:0.630px;">(or click)</div><svg style="position:absolute;left:1420px;top:200px" width="21" height="28" viewBox="0 0 21 28"><path d="M1.1 3.3a2.2 2.2 0 0 1 2.2-2.2h9.4l7.2 7.2v16.4a2.2 2.2 0 0 1-2.2 2.2H3.3a2.2 2.2 0 0 1-2.2-2.2z" fill="none" stroke="#777" stroke-width="2.2"/><path d="M12.4 1.1v6.7h7.4z" fill="#777"/><path d="M6.2 14.7h8.6M6.2 19.8h8.6" stroke="#777" stroke-width="2" stroke-linecap="round"/></svg><svg style="position:absolute;left:1446px;top:200px" width="21" height="28" viewBox="0 0 21 28" fill="#777"><path d="M0 2.5A2.5 2.5 0 0 1 2.5 0H12v8.5h8.7v17a2.5 2.5 0 0 1-2.5 2.5H2.5A2.5 2.5 0 0 1 0 25.5z"/><path d="M14 0l6.7 6.7H14z"/><path d="M5 14.4h10.6M5 17.7h10.6M5 21.3h10.6" stroke="#fff" stroke-width="1.4"/></svg><svg style="position:absolute;left:1393.0px;top:242.5px" width="17.5" height="17" viewBox="-.55 -.55 16.2 15.8"><path d="M7.5 0l2.2 4.9 5.3.5-4 3.6 1.2 5.2-4.7-2.8-4.7 2.8 1.2-5.2-4-3.6 5.3-.5z" fill="#e31937" stroke="#e31937" stroke-width="1.1" stroke-linejoin="round"/></svg><svg style="position:absolute;left:1408.05px;top:242.5px" width="17.5" height="17" viewBox="-.55 -.55 16.2 15.8"><path d="M7.5 0l2.2 4.9 5.3.5-4 3.6 1.2 5.2-4.7-2.8-4.7 2.8 1.2-5.2-4-3.6 5.3-.5z" fill="#e31937" stroke="#e31937" stroke-width="1.1" stroke-linejoin="round"/></svg><svg style="position:absolute;left:1423.1px;top:242.5px" width="17.5" height="17" viewBox="-.55 -.55 16.2 15.8"><path d="M7.5 0l2.2 4.9 5.3.5-4 3.6 1.2 5.2-4.7-2.8-4.7 2.8 1.2-5.2-4-3.6 5.3-.5z" fill="#e31937" stroke="#e31937" stroke-width="1.1" stroke-linejoin="round"/></svg><svg style="position:absolute;left:1438.15px;top:242.5px" width="17.5" height="17" viewBox="-.55 -.55 16.2 15.8"><path d="M7.5 0l2.2 4.9 5.3.5-4 3.6 1.2 5.2-4.7-2.8-4.7 2.8 1.2-5.2-4-3.6 5.3-.5z" fill="#fff" stroke="#e31937" stroke-width="1.1" stroke-linejoin="round"/></svg><svg style="position:absolute;left:1453.2px;top:242.5px" width="17.5" height="17" viewBox="-.55 -.55 16.2 15.8"><path d="M7.5 0l2.2 4.9 5.3.5-4 3.6 1.2 5.2-4.7-2.8-4.7 2.8 1.2-5.2-4-3.6 5.3-.5z" fill="#fff" stroke="#e31937" stroke-width="1.1" stroke-linejoin="round"/></svg><svg style="position:absolute;left:1478.3px;top:241.8px" width="15" height="17.3" viewBox="0 0 15 17.3"><path fill-rule="evenodd" d="M8.2 0C9.2 2.6 11.6 4.3 12.3 7.2L13.3 5.6C14.6 7.4 15 9.6 15 11.3A7.5 6 0 0 1 0 11.3C0 9.2 1 7.3 2.2 5.8L3.3 8C3.9 4.8 6.3 2.6 8.2 0ZM7.5 8.6C6 10.3 4.6 11.8 4.6 13.5A2.9 2.9 0 0 0 10.4 13.5C10.4 11.8 9 10.3 7.5 8.6Z" fill="#c5cfe0"/></svg><div class="t" style="left:1516.70px;top:83.00px;font-size:22.8px;line-height:22.8px;color:#1e1e28;letter-spacing:1.616px;-webkit-text-stroke:0.2px currentColor;">Iron Mike</div><svg style="position:absolute;left:1627px;top:88px" width="11.5" height="9.3" viewBox="0 0 12 10" preserveAspectRatio="none" fill="none" stroke="#e31937"><path d="M5 1.2H1.6a.9.9 0 0 0-.9.9v6.6a.9.9 0 0 0 .9.9h6.3a.9.9 0 0 0 .9-.9V5.6" stroke-width="1"/><path d="M4.6 6L10 .8" stroke-width="1.4"/><path d="M6.8 0H12V5.2z" fill="#e31937" stroke="none"/></svg><div style="position:absolute;left:1644px;top:79px;width:51px;height:28px;background:#62bb27;border-radius:6px"></div><div class="t" style="left:1654.00px;top:85.15px;font-size:14px;line-height:14px;font-weight:700;color:#fff;letter-spacing:1.052px;">New</div><svg style="position:absolute;left:1516px;top:117px" width="20" height="20" viewBox="0 0 20 20"><rect width="20" height="20" rx="3.5" fill="#757575"/><path d="M4 8h2.6v8H4zM5.3 4a1.5 1.5 0 1 1 0 3 1.5 1.5 0 0 1 0-3zM8.4 8h2.5v1.1c.4-.7 1.3-1.3 2.6-1.3 2.7 0 3.1 1.7 3.1 4V16H14v-3.6c0-.9 0-2-1.3-2s-1.5 1-1.5 2V16H8.4z" fill="#fff"/></svg><svg style="position:absolute;left:1541px;top:117px" width="20" height="20" viewBox="0 0 20 20"><rect width="20" height="20" rx="3.5" fill="#757575"/><path d="M4.5 4h3.3l3 4.2L14.3 4h1.5l-4.3 5.1L16 16h-3.3l-3.2-4.6L5.5 16H4l4.8-5.6z" fill="none" stroke="#fff" stroke-width=".9"/></svg><svg style="position:absolute;left:1566px;top:117px" width="20" height="20" viewBox="0 0 20 20"><rect width="20" height="20" rx="3.5" fill="#757575"/><path d="M11 17v-6.5h2.2l.4-2.5H11V6.5c0-.7.3-1.2 1.3-1.2h1.4V3.1c-.3 0-1.1-.1-2-.1-2.1 0-3.3 1.2-3.3 3.4V8H6.2v2.5h2.2V17z" fill="#fff"/></svg><svg style="position:absolute;left:1591px;top:117px" width="20" height="20" viewBox="0 0 20 20"><rect width="20" height="20" rx="3.5" fill="#757575"/><path d="M3.5 15v-4a6.5 6.5 0 0 1 13 0v4" fill="none" stroke="#fff" stroke-width="1.6"/><rect x="3" y="11.5" width="3" height="5" rx="1" fill="#fff"/><rect x="14" y="11.5" width="3" height="5" rx="1" fill="#fff"/></svg><svg style="position:absolute;left:1616px;top:117px" width="20" height="20" viewBox="0 0 20 20"><rect width="20" height="20" rx="3.5" fill="#757575"/><path d="M6 6.5h2.3l1.6 2.8-2.1 3.5H5.5l2.1-3.5zM12.8 3h2.4l-4 7 2.6 5H11.4l-2.6-5z" fill="#fff"/></svg><svg style="position:absolute;left:1641px;top:117px" width="20" height="20" viewBox="0 0 20 20"><rect width="20" height="20" rx="3.5" fill="#757575"/><path d="M5.5 3.5L16 10 5.5 16.5z" fill="#fff"/></svg><svg style="position:absolute;left:1666px;top:117px" width="20" height="20" viewBox="0 0 20 20"><rect width="20" height="20" rx="3.5" fill="#757575"/><circle cx="10" cy="10" r="6.5" fill="#fff"/><path d="M8 4.5c1 1 .5 2 1.5 2.5s1 1.5.5 2-1.5 0-2 1 .5 1.5 1.5 2 1 2 .5 3M12.5 12c.5.5 1 1.5.5 2.5" fill="none" stroke="#777" stroke-width="1.2"/></svg><svg style="position:absolute;left:1691px;top:117px" width="20" height="20" viewBox="0 0 20 20"><rect width="20" height="20" rx="3.5" fill="#757575"/><path d="M10 3a4.8 4.8 0 0 1 4.8 4.8c0 3.2-4.8 9.2-4.8 9.2S5.2 11 5.2 7.8A4.8 4.8 0 0 1 10 3z" fill="#fff"/><circle cx="10" cy="7.8" r="1.8" fill="#777"/></svg><div class="t" style="left:1516.00px;top:148.92px;font-size:14.5px;line-height:14.5px;color:#2a2a30;letter-spacing:0.693px;">Current Contract Extn3 at firefish software</div><svg style="position:absolute;left:1821px;top:151px" width="11.5" height="9.3" viewBox="0 0 12 10" preserveAspectRatio="none" fill="none" stroke="#e31937"><path d="M5 1.2H1.6a.9.9 0 0 0-.9.9v6.6a.9.9 0 0 0 .9.9h6.3a.9.9 0 0 0 .9-.9V5.6" stroke-width="1"/><path d="M4.6 6L10 .8" stroke-width="1.4"/><path d="M6.8 0H12V5.2z" fill="#e31937" stroke="none"/></svg><div class="t" style="left:1516.00px;top:170.72px;font-size:14.5px;line-height:14.5px;color:#2a2a30;letter-spacing:0.504px;">Preference is for Full Stack Developer</div><div class="t" style="left:1516.00px;top:192.32px;font-size:14.5px;line-height:14.5px;color:#2a2a30;letter-spacing:0.382px;">Looking for Rate: £12.50 per hour | £100 per day</div><div style="position:absolute;left:1516px;top:212px;width:83px;height:22px;background:#0f9f22;border-radius:11px"></div><div style="position:absolute;left:1603px;top:212px;width:83px;height:22px;background:#00d8f3;border-radius:11px"></div><div style="position:absolute;left:1690px;top:212px;width:83px;height:22px;background:#c7005b;border-radius:11px"></div><div style="position:absolute;left:1777px;top:212px;width:83px;height:22px;background:#060f56;border-radius:11px"></div><div style="position:absolute;left:2148px;top:83px;width:48px;height:24px;background:#5cb70c;border-radius:12px"></div><div class="t" style="left:2155.00px;top:89.34px;font-size:12px;line-height:12px;color:#fff;letter-spacing:-0.335px;-webkit-text-stroke:0.2px #fff;">GDPR</div><div style="position:absolute;left:2114px;top:112px;width:82px;height:25px;background:#5cb70c;border-radius:12.5px"></div><div class="t" style="left:2121.30px;top:118.42px;font-size:12.5px;line-height:12.5px;color:#fff;letter-spacing:1.337px;-webkit-text-stroke:0.2px #fff;">Compliant</div><svg style="position:absolute;left:1516px;top:254px" width="39" height="39" viewBox="0 0 39 39"><circle cx="19.5" cy="19.5" r="18.4" fill="#fff" stroke="#e31937" stroke-width="2"/><g fill="none" stroke="#e31937"><path d="M19.2 14.9H27.3M19.2 19.9H27.3M16.8 24.8H27.3" stroke-width="2"/><path d="M11.3 15.2l1.8 1.7 2.8-3.2M11.3 20.2l1.8 1.7 2.8-3.2" stroke-width="1.5"/></g><circle cx="13" cy="24.9" r="1.4" fill="#e31937"/></svg><div class="t" style="left:1559.40px;top:264.70px;font-size:15px;line-height:15px;color:#2a2a30;letter-spacing:0.019px;">Task</div><svg style="position:absolute;left:1604.3px;top:254px" width="39" height="39" viewBox="0 0 39 39"><circle cx="19.5" cy="19.5" r="18.4" fill="#fff" stroke="#e31937" stroke-width="2"/><rect x="11.8" y="12.1" width="15.8" height="12.7" rx="1.6" fill="#e31937"/><path d="M16.3 24.5V28.2L21 24.5z" fill="#e31937"/></svg><div class="t" style="left:1648.40px;top:264.70px;font-size:15px;line-height:15px;color:#2a2a30;letter-spacing:0.553px;">Note</div><svg style="position:absolute;left:1694.4px;top:254px" width="39" height="39" viewBox="0 0 39 39"><circle cx="19.5" cy="19.5" r="18.4" fill="#fff" stroke="#e31937" stroke-width="2"/><path transform="translate(-3.33 -0.63) scale(1.18)" d="M13.5 11.5l2.5-.8 2 4.2-1.8 1.5c.8 1.8 2.2 3.2 4 4l1.5-1.8 4.2 2-.8 2.5c-.3.8-1 1.2-1.8 1.1-5.5-.8-9.8-5.1-10.6-10.6-.1-.8.3-1.5 1.1-1.8z" fill="#e31937"/></svg><div class="t" style="left:1737.80px;top:264.70px;font-size:15px;line-height:15px;color:#2a2a30;letter-spacing:0.408px;">Call &amp; Message</div><svg style="position:absolute;left:1861.3px;top:254px" width="39" height="39" viewBox="0 0 39 39"><circle cx="19.5" cy="19.5" r="18.4" fill="#fff" stroke="#e31937" stroke-width="2"/><rect x="11.6" y="14.1" width="16.2" height="11.8" rx="1.6" fill="#e31937"/><path d="M11.9 15.6L19.7 22L27.5 15.6" fill="none" stroke="#fff" stroke-width="1.2"/></svg><div class="t" style="left:1905.00px;top:264.70px;font-size:15px;line-height:15px;color:#2a2a30;letter-spacing:0.456px;">Email</div><svg style="position:absolute;left:1957.4px;top:254px" width="39" height="39" viewBox="0 0 39 39"><circle cx="19.5" cy="19.5" r="18.4" fill="#fff" stroke="#e31937" stroke-width="2"/><rect x="10.8" y="14.1" width="13.8" height="13.9" rx="1.2" fill="#e31937"/><path d="M14 11.8v3.5M20.4 11.8v3.5" stroke="#e31937" stroke-width="1.6"/><path d="M10.8 17.3h13.8" stroke="#fff" stroke-width=".9"/></svg><div class="t" style="left:2000.50px;top:264.70px;font-size:15px;line-height:15px;color:#2a2a30;letter-spacing:0.746px;">Meeting</div><div style="position:absolute;left:1351px;top:319px;width:855px;height:33px;background:#ebe1e4;border-radius:8px"></div><div style="position:absolute;left:1351px;top:319px;width:85px;height:33px;background:#fff;border-radius:8px 0 0 8px"></div><div style="position:absolute;left:1552px;top:319px;width:1.5px;height:33px;background:#fbf7f8"></div><div style="position:absolute;left:1614px;top:319px;width:1.5px;height:33px;background:#fbf7f8"></div><div style="position:absolute;left:1705px;top:319px;width:1.5px;height:33px;background:#fbf7f8"></div><div class="t" style="left:1367.30px;top:326.03px;font-size:16.5px;line-height:16.5px;font-weight:700;color:#111;letter-spacing:0.255px;">Profile</div><div class="t" style="left:1452.00px;top:326.03px;font-size:16.5px;line-height:16.5px;color:#111;letter-spacing:0.636px;">Details</div><div style="position:absolute;left:1511px;top:323px;width:24.5px;height:24.5px;background:#e31937;border-radius:50%"></div><div class="t" style="left:1519.50px;top:328.15px;font-size:14px;line-height:14px;font-weight:700;color:#fff;">1</div><div class="t" style="left:1569.00px;top:326.03px;font-size:16.5px;line-height:16.5px;color:#111;letter-spacing:0.209px;">Pay</div><div class="t" style="left:1631.00px;top:326.03px;font-size:16.5px;line-height:16.5px;color:#111;letter-spacing:0.571px;">Activity</div><div style="position:absolute;left:0;top:0;width:2228px;height:1259px;clip-path:inset(53px 7px 59px 1336px)"><div style="position:absolute;left:1351px;top:367px;width:855px;height:1000px;background:#fff;border-radius:8px 8px 0 0"></div><div style="position:absolute;left:1356px;top:377px;width:845px;height:1px;background:#e3e6ee"></div><div class="t" style="left:1356.00px;top:393.36px;font-size:18px;line-height:18px;font-weight:700;color:#2b2b33;letter-spacing:0.746px;">Recruiter Summary</div><svg style="position:absolute;left:1543px;top:397px" width="12" height="7" viewBox="0 0 12 7"><path d="M0 7H12L6.0 0Z" fill="#2b2b33"/></svg><svg style="position:absolute;left:1356px;top:435px" width="15" height="15" viewBox="0 0 15 15"><path d="M2.2 13L12.4 2.8" stroke="#b5bac5" stroke-width="3.2" stroke-linecap="square"/><path d="M10.6 4.6L12 3.2" stroke="#fff" stroke-width="1"/><path d="M1.3 1.8h1.6M2.1 1v1.6M4.7 1.2h1.6M5.5.4V2M3 3.6h1.2M3.6 3v1.2M13.6 8.8h1" stroke="#b5bac5" stroke-width=".8"/></svg><div class="t" style="left:1376.80px;top:434.95px;font-size:16px;line-height:16px;color:#b5bac5;letter-spacing:0.889px;">Suggest</div><div style="position:absolute;left:1361px;top:468px;width:835px;height:126px;border:1px solid #c5cfe0;border-radius:4px"></div><svg style="position:absolute;left:2186px;top:584px" width="7" height="7" viewBox="0 0 7 7" stroke="#777" stroke-width=".8"><path d="M1 7L7 1M4 7L7 4"/></svg><div class="t" style="left:1361.00px;top:600.49px;font-size:13px;line-height:13px;color:#c5cbe0;letter-spacing:0.363px;">5000 characters remaining.</div><div style="position:absolute;left:1356px;top:617px;width:845px;height:1px;background:#e3e6ee"></div><div class="t" style="left:1356.00px;top:632.76px;font-size:18px;line-height:18px;font-weight:700;color:#2b2b33;letter-spacing:0.037px;">Top Skills</div><svg style="position:absolute;left:1445.5px;top:637px" width="11.5" height="7" viewBox="0 0 11.5 7"><path d="M0 7H11.5L5.75 0Z" fill="#2b2b33"/></svg><svg style="position:absolute;left:1461.5px;top:634.5px" width="10" height="10" viewBox="0 0 10 10"><path d="M5 0v10M0 5h10" stroke="#5cb70c" stroke-width="1.6"/></svg><div class="t" style="left:1477.00px;top:632.75px;font-size:16px;line-height:16px;color:#2b2b33;letter-spacing:1.215px;">Add</div><div class="t" style="left:1356.00px;top:673.81px;font-size:17px;line-height:17px;color:#111;letter-spacing:0.665px;">None added or detected in employment history.</div><div style="position:absolute;left:1356px;top:696px;width:845px;height:1px;background:#e3e6ee"></div><div class="t" style="left:1356.00px;top:712.26px;font-size:18px;line-height:18px;font-weight:700;color:#2b2b33;letter-spacing:0.397px;">Personal Details</div><svg style="position:absolute;left:1506px;top:717px" width="11.5" height="7" viewBox="0 0 11.5 7"><path d="M0 7H11.5L5.75 0Z" fill="#2b2b33"/></svg><div style="position:absolute;left:1643px;top:750.4px;width:553px;height:37.5px;border:1px solid #c5cfe0;border-radius:5px;background:#fff"></div><div class="t" style="left:1361.50px;top:761.01px;font-size:17px;line-height:17px;color:#111;letter-spacing:0.092px;">Title</div><div class="t" style="left:1653.40px;top:761.01px;font-size:17px;line-height:17px;color:#111;letter-spacing:0.673px;">-- Please Select --</div><div style="position:absolute;left:1643px;top:791.6px;width:553px;height:37.5px;border:1px solid #c5cfe0;border-radius:5px;background:#fff"></div><div class="t" style="left:1361.50px;top:802.26px;font-size:17px;line-height:17px;color:#111;letter-spacing:0.663px;">Name:</div><div class="t" style="left:1649.30px;top:803.10px;font-size:16px;line-height:16px;color:#111;letter-spacing:1.276px;">Iron</div><div style="position:absolute;left:1643px;top:832.9px;width:553px;height:37.5px;border:1px solid #c5cfe0;border-radius:5px;background:#fff"></div><div class="t" style="left:1649.30px;top:844.35px;font-size:16px;line-height:16px;color:#777;letter-spacing:1.164px;">Middle Name</div><div style="position:absolute;left:1643px;top:874.1px;width:553px;height:37.5px;border:1px solid #c5cfe0;border-radius:5px;background:#fff"></div><div class="t" style="left:1649.30px;top:885.60px;font-size:16px;line-height:16px;color:#111;letter-spacing:0.706px;">Mike</div><div style="position:absolute;left:1643px;top:915.4px;width:553px;height:37.5px;border:1px solid #c5cfe0;border-radius:5px;background:#fff"></div><div class="t" style="left:1361.50px;top:926.01px;font-size:17px;line-height:17px;color:#111;letter-spacing:0.057px;">Known As:</div><div class="t" style="left:1649.30px;top:926.85px;font-size:16px;line-height:16px;color:#111;letter-spacing:1.276px;">Iron</div><div style="position:absolute;left:1643px;top:956.6px;width:553px;height:37.5px;border:1px solid #c5cfe0;border-radius:5px;background:#fff"></div><div class="t" style="left:1361.50px;top:967.26px;font-size:17px;line-height:17px;color:#111;letter-spacing:0.377px;">Address:</div><div class="t" style="left:1649.30px;top:968.10px;font-size:16px;line-height:16px;color:#777;letter-spacing:-0.539px;">Line 1</div><div style="position:absolute;left:1643px;top:997.9px;width:553px;height:37.5px;border:1px solid #c5cfe0;border-radius:5px;background:#fff"></div><div class="t" style="left:1649.30px;top:1009.35px;font-size:16px;line-height:16px;color:#777;letter-spacing:0.261px;">Line 2</div><div style="position:absolute;left:1643px;top:1039.2px;width:553px;height:37.5px;border:1px solid #c5cfe0;border-radius:5px;background:#fff"></div><div class="t" style="left:1649.30px;top:1050.60px;font-size:16px;line-height:16px;color:#777;letter-spacing:0.261px;">Line 3</div><div style="position:absolute;left:1643px;top:1080.4px;width:553px;height:37.5px;border:1px solid #c5cfe0;border-radius:5px;background:#fff"></div><div class="t" style="left:1361.50px;top:1091.01px;font-size:17px;line-height:17px;color:#111;letter-spacing:0.702px;">Town/City:</div><div class="t" style="left:1649.30px;top:1091.85px;font-size:16px;line-height:16px;color:#777;letter-spacing:1.331px;">Town/City</div><div style="position:absolute;left:1643px;top:1121.7px;width:553px;height:37.5px;border:1px solid #c5cfe0;border-radius:5px;background:#fff"></div><div style="position:absolute;left:1643px;top:1162.9px;width:553px;height:37.5px;border:1px solid #c5cfe0;border-radius:5px;background:#fff"></div><div style="position:absolute;left:1643px;top:1204.2px;width:553px;height:37.5px;border:1px solid #c5cfe0;border-radius:5px;background:#fff"></div><svg style="position:absolute;left:2181px;top:765px" width="10" height="7" viewBox="0 0 10 7"><path d="M1 1l4 4 4-4" fill="none" stroke="#111" stroke-width="1.8"/></svg><div style="position:absolute;left:1351px;top:1135px;width:855px;height:55px;background:#ebe1e4;border-radius:12px"></div><div class="t" style="left:1361.40px;top:1153.25px;font-size:16px;line-height:16px;color:#e31937;letter-spacing:1.086px;-webkit-text-stroke:0.1px currentColor;">You have unsaved changes</div><div style="position:absolute;left:1983px;top:1145px;width:109px;height:35px;border:1.5px solid #e31937;border-radius:18px;box-sizing:border-box"></div><div class="t" style="left:2009.00px;top:1153.23px;font-size:16.5px;line-height:16.5px;color:#e31937;letter-spacing:1.061px;-webkit-text-stroke:0.1px currentColor;">Cancel</div><div style="position:absolute;left:2102px;top:1145px;width:91px;height:35px;background:#e31937;border-radius:18px"></div><div class="t" style="left:2128.50px;top:1153.23px;font-size:16.5px;line-height:16.5px;color:#fff;letter-spacing:0.189px;-webkit-text-stroke:0.35px currentColor;">Save</div></div><div style="position:absolute;left:1336px;top:1200px;width:892px;height:59px;background:#e4e9e0"></div><div style="position:absolute;left:2070px;top:1215px;width:141.5px;height:33.5px;border:1.5px solid #e31937;border-radius:18px"></div><div class="t" style="left:2097.00px;top:1222.83px;font-size:16.5px;line-height:16.5px;color:#e31937;letter-spacing:0.214px;-webkit-text-stroke:0.1px currentColor;">View Profile</div>
</body></html>
